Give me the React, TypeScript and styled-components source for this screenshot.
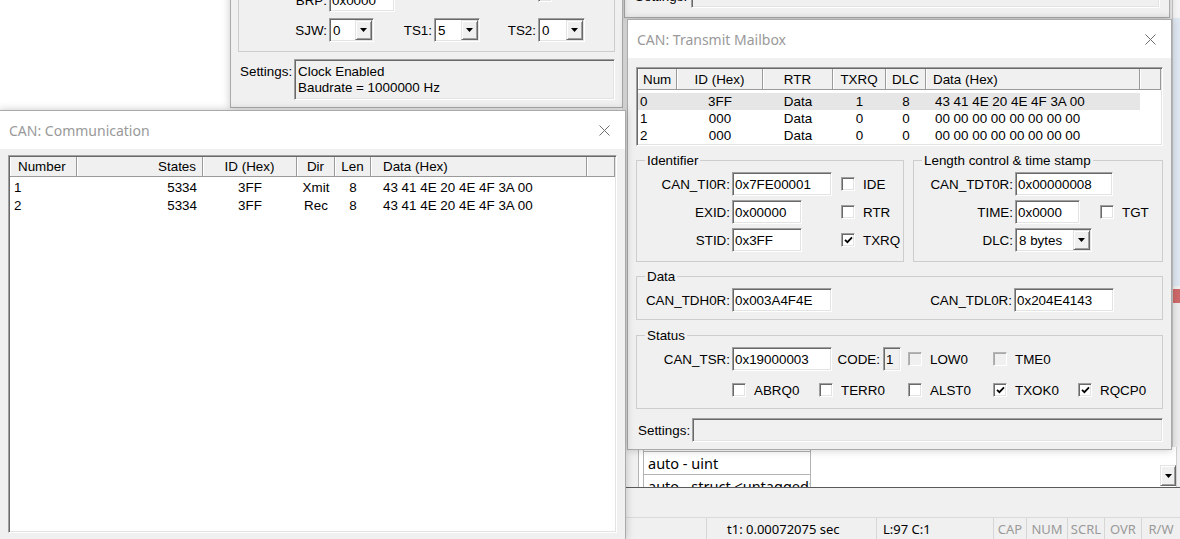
import React from "react";
import styled, { createGlobalStyle, css } from "styled-components";

const UI = `"Liberation Sans", Arial, sans-serif`;
const SEG = `"Noto Sans", "Open Sans", sans-serif`;

const GlobalStyle = createGlobalStyle`
  html, body { margin: 0; padding: 0; background: #ffffff; }
  body { font-family: ${UI}; font-size: 13.4px; color: #000; }
  * { box-sizing: border-box; }
`;

const sunken = css`
  border: 1px solid;
  border-color: #a0a0a0 #ffffff #ffffff #a0a0a0;
  box-shadow: inset 1px 1px 0 #696969, inset -1px -1px 0 #e3e3e3;
`;
const raised = css`
  border: 1px solid;
  border-color: #e3e3e3 #696969 #696969 #e3e3e3;
  box-shadow: inset 1px 1px 0 #ffffff, inset -1px -1px 0 #a0a0a0;
`;

/* ---------- desktop / IDE backdrop ---------- */
const Desktop = styled.div`
  position: relative;
  width: 1180px;
  height: 539px;
  overflow: hidden;
  display: flex;
  background: #fff;
`;
const Editor = styled.div`
  flex: 1;
  background: #fff;
`;
const Ide = styled.div`
  width: 558px;
  flex: none;
  display: flex;
  flex-direction: column;
  background: #f0f0f0;
`;
const IdeUpper = styled.div`
  height: 447px;
  flex: none;
  display: flex;
`;
const IdeFill = styled.div`
  flex: 1;
  background: #f0f0f0;
`;
const Strip = styled.div`
  width: 8px;
  flex: none;
  display: flex;
  flex-direction: column;
  border-left: 1px solid #c8c8c8;
`;
const StripPart = styled.div<{ $h?: number; $bg: string }>`
  ${(p) => (p.$h ? `height: ${p.$h}px; flex: none;` : "flex: 1;")}
  background: ${(p) => p.$bg};
`;
const WatchArea = styled.div`
  height: 40px;
  flex: none;
  display: flex;
  background: #fff;
  overflow: hidden;
`;
const WatchGutter = styled.div`
  width: 17px;
  flex: none;
  background: #f0f0f0;
  border-right: 1px solid #b4b4b4;
`;
const WatchPad = styled.div`
  width: 5px;
  flex: none;
  border-right: 1px solid #b4b4b4;
`;
const WatchCol = styled.div`
  width: 167px;
  flex: none;
  border-right: 1px solid #b4b4b4;
  display: flex;
  flex-direction: column;
  overflow: hidden;
`;
const WatchCell = styled.div<{ $h: number }>`
  height: ${(p) => p.$h}px;
  flex: none;
  border-bottom: 1px solid #b4b4b4;
  padding-left: 4px;
  display: flex;
  align-items: center;
  font-family: ${SEG};
  font-size: 14.5px;
  white-space: nowrap;
  overflow: hidden;
`;
const WatchWhite = styled.div`
  flex: 1;
`;
const ScrollCol = styled.div`
  width: 16px;
  flex: none;
  display: flex;
  flex-direction: column;
  justify-content: flex-end;
  padding-bottom: 1px;
`;
const ScrollBtn = styled.div`
  ${raised}
  height: 21px;
  background: #f0f0f0;
  display: flex;
  align-items: center;
  justify-content: center;
`;
const WatchEdge = styled.div`
  width: 4px;
  flex: none;
  background: #f0f0f0;
  border-left: 1px solid #d0d0d0;
`;
const Divider = styled.div`
  height: 1px;
  flex: none;
  background: #5a5a5a;
`;
const Band = styled.div`
  height: 29px;
  flex: none;
  background: #f0f0f0;
`;
const StatusBar = styled.div`
  height: 22px;
  flex: none;
  display: flex;
  border-top: 1px solid #dadada;
  font-family: ${SEG};
  font-size: 13px;
  background: #f0f0f0;
`;
const SCell = styled.div<{ $w?: number; $pl?: number; $dim?: boolean; $sep?: boolean }>`
  ${(p) => (p.$w ? `width: ${p.$w}px; flex: none;` : "flex: 1;")}
  display: flex;
  align-items: center;
  justify-content: ${(p) => (p.$pl !== undefined ? "flex-start" : "center")};
  padding-left: ${(p) => p.$pl ?? 0}px;
  color: ${(p) => (p.$dim ? "#9a9a9a" : "#000")};
  border-left: ${(p) => (p.$sep ? "1px solid #d6d6d6" : "none")};
  white-space: nowrap;
`;

/* ---------- window chrome ---------- */
const Win = styled.div<{ $x: number; $y: number; $w: number; $h: number; $z: number }>`
  position: absolute;
  left: ${(p) => p.$x}px;
  top: ${(p) => p.$y}px;
  width: ${(p) => p.$w}px;
  height: ${(p) => p.$h}px;
  z-index: ${(p) => p.$z};
  background: #f0f0f0;
  border: 1px solid #aaaaaa;
  box-shadow: 0 0 8px rgba(0, 0, 0, 0.22);
  display: flex;
  flex-direction: column;
`;
const TitleBar = styled.div`
  height: 38px;
  flex: none;
  background: #fff;
  display: flex;
  align-items: center;
  justify-content: space-between;
  padding: 0 15px 0 9px;
  font-family: ${SEG};
  font-size: 14px;
  color: #999;
`;
const Body = styled.div<{ $pad: string }>`
  flex: 1;
  min-height: 0;
  display: flex;
  flex-direction: column;
  padding: ${(p) => p.$pad};
`;

const CloseIcon = () => (
  <svg width="11" height="11" viewBox="0 0 11 11">
    <path d="M0.5 0.5 L10.5 10.5 M10.5 0.5 L0.5 10.5" stroke="#707070" strokeWidth="1" fill="none" />
  </svg>
);
const DownArrow = () => (
  <svg width="7" height="4" viewBox="0 0 7 4">
    <path d="M0 0 H7 L3.5 4 Z" fill="#000" />
  </svg>
);
const Tick = () => (
  <svg width="9" height="8" viewBox="0 0 9 8">
    <path d="M1 3.8 L3.4 6.2 L8 1.4" fill="none" stroke="#000" strokeWidth="1.8" />
  </svg>
);

/* ---------- controls ---------- */
const TextBox = styled.div<{ $w: number; $ro?: boolean; $span?: number }>`
  ${sunken}
  width: ${(p) => p.$w}px;
  height: 24px;
  flex: none;
  background: ${(p) => (p.$ro ? "#f0f0f0" : "#fff")};
  padding: 0 2px;
  display: flex;
  align-items: center;
  white-space: nowrap;
  overflow: hidden;
  ${(p) => (p.$span ? `grid-column: span ${p.$span};` : "")}
`;
const MultiField = styled.div<{ $h: number }>`
  ${sunken}
  flex: 1;
  height: ${(p) => p.$h}px;
  background: #f0f0f0;
  padding: 4px 3px;
  line-height: 16px;
`;
const ComboBox = styled.div<{ $w: number }>`
  ${sunken}
  width: ${(p) => p.$w}px;
  height: 24px;
  flex: none;
  background: #fff;
  padding: 1px;
  display: flex;
`;
const ComboText = styled.span`
  flex: 1;
  padding-left: 2px;
  display: flex;
  align-items: center;
  white-space: nowrap;
`;
const ComboBtn = styled.span`
  ${raised}
  width: 17px;
  flex: none;
  background: #f0f0f0;
  display: flex;
  align-items: center;
  justify-content: center;
`;
const Combo = ({ w, value }: { w: number; value: string }) => (
  <ComboBox $w={w}>
    <ComboText>{value}</ComboText>
    <ComboBtn>
      <DownArrow />
    </ComboBtn>
  </ComboBox>
);

const Box = styled.span<{ $dis?: boolean; $top?: boolean }>`
  ${sunken}
  width: 14px;
  height: 14px;
  flex: none;
  background: ${(p) => (p.$dis ? "#f0f0f0" : "#fff")};
  ${(p) => (p.$dis ? "border-color: #b4b4b4 #fff #fff #b4b4b4; box-shadow: inset 1px 1px 0 #a8a8a8;" : "")}
  display: inline-flex;
  align-items: center;
  justify-content: center;
  ${(p) => (p.$top ? "align-self: flex-start;" : "")}
`;
const CheckItem = styled.label`
  display: flex;
  align-items: center;
  gap: 8px;
  white-space: nowrap;
`;
const Check = ({ label, checked, disabled }: { label: string; checked?: boolean; disabled?: boolean }) => (
  <CheckItem>
    <Box $dis={disabled}>{checked ? <Tick /> : null}</Box>
    <span>{label}</span>
  </CheckItem>
);

const FLabel = styled.span<{ $w?: number }>`
  ${(p) => (p.$w ? `width: ${p.$w}px; flex: none;` : "")}
  text-align: right;
  padding-right: 2px;
  white-space: nowrap;
`;

/* ---------- groups / forms ---------- */
const Group = styled.fieldset<{ $w?: number; $pb: number; $mt?: number }>`
  margin: ${(p) => p.$mt ?? 0}px 0 0 0;
  padding: 4px 0 ${(p) => p.$pb}px 0;
  border: 1px solid #cdcdcd;
  min-width: 0;
  ${(p) => (p.$w ? `width: ${p.$w}px; flex: none;` : "flex: 1;")}
`;
const Legend = styled.legend`
  margin-left: 8px;
  padding: 0 2px;
  font-size: 13.4px;
  line-height: 15px;
`;
const GroupPair = styled.div<{ $mt: number }>`
  display: flex;
  gap: 9px;
  margin-top: ${(p) => p.$mt}px;
`;
const FormGrid = styled.div<{ $cols: string }>`
  display: grid;
  grid-template-columns: ${(p) => p.$cols};
  grid-auto-rows: 24px;
  row-gap: 4px;
  align-items: center;
  justify-items: start;
  & > ${FLabel} {
    justify-self: stretch;
  }
`;
const StatusRows = styled.div`
  display: flex;
  flex-direction: column;
  gap: 7px;
`;
const CodeWrap = styled.div`
  justify-self: stretch;
  display: flex;
  align-items: center;
  justify-content: flex-end;
  gap: 3px;
  padding-right: 7px;
`;
const SettingsRow = styled.div<{ $mt?: number; $top?: boolean }>`
  display: flex;
  align-items: ${(p) => (p.$top ? "flex-start" : "center")};
  margin-top: ${(p) => p.$mt ?? 0}px;
`;
const SetLabel = styled.span<{ $w: number; $pt?: number }>`
  width: ${(p) => p.$w}px;
  flex: none;
  padding-left: 2px;
  padding-top: ${(p) => p.$pt ?? 0}px;
  white-space: nowrap;
`;
const Frame = styled.div`
  border: 1px solid #cdcdcd;
  padding: 21px 0 9px 0;
  display: flex;
  flex-direction: column;
  gap: 6px;
`;
const FrameRow = styled.div`
  height: 24px;
  display: flex;
  align-items: center;
`;
const Gap = styled.span<{ $w: number }>`
  width: ${(p) => p.$w}px;
  flex: none;
`;

/* ---------- list view ---------- */
type Align = "left" | "center" | "right";
interface Col {
  t: string;
  w: number;
  ha: Align;
  ca: Align;
  hp: number;
  cp: number;
}
const jc = (a: Align) => (a === "left" ? "flex-start" : a === "right" ? "flex-end" : "center");

const ListFrame = styled.div<{ $h?: number }>`
  ${sunken}
  background: #fff;
  padding: 1px;
  display: flex;
  flex-direction: column;
  overflow: hidden;
  ${(p) => (p.$h ? `height: ${p.$h}px; flex: none;` : "flex: 1;")}
`;
const HeadRow = styled.div<{ $h: number }>`
  height: ${(p) => p.$h}px;
  flex: none;
  display: flex;
  background: #f0f0f0;
  border-bottom: 1px solid #9a9a9a;
`;
const HeadCell = styled.div<{ $w?: number; $a: Align; $p: number }>`
  ${(p) => (p.$w ? `width: ${p.$w}px; flex: none;` : "flex: 1;")}
  display: flex;
  align-items: center;
  justify-content: ${(p) => jc(p.$a)};
  padding: 0 ${(p) => p.$p}px;
  border-right: 1px solid #9a9a9a;
  box-shadow: inset 1px 0 0 #ffffff;
  white-space: nowrap;
  overflow: hidden;
`;
const RowsArea = styled.div<{ $pt: number }>`
  padding-top: ${(p) => p.$pt}px;
  display: flex;
  flex-direction: column;
  align-items: flex-start;
`;
const LRow = styled.div<{ $h: number; $sel?: boolean }>`
  display: flex;
  height: ${(p) => p.$h}px;
  background: ${(p) => (p.$sel ? "#e6e6e6" : "transparent")};
`;
const LCell = styled.div<{ $w: number; $a: Align; $p: number }>`
  width: ${(p) => p.$w}px;
  flex: none;
  display: flex;
  align-items: center;
  justify-content: ${(p) => jc(p.$a)};
  padding: 0 ${(p) => p.$p}px;
  white-space: nowrap;
`;

const ListView = ({
  cols,
  rows,
  height,
  headH,
  rowTop,
  rowH,
  sel,
}: {
  cols: Col[];
  rows: string[][];
  height?: number;
  headH: number;
  rowTop: number;
  rowH: number;
  sel?: number;
}) => (
  <ListFrame $h={height}>
    <HeadRow $h={headH}>
      {cols.map((c) => (
        <HeadCell key={c.t} $w={c.w} $a={c.ha} $p={c.hp}>
          {c.t}
        </HeadCell>
      ))}
      <HeadCell $a="left" $p={0} />
    </HeadRow>
    <RowsArea $pt={rowTop}>
      {rows.map((r, i) => (
        <LRow key={i} $h={rowH} $sel={i === sel}>
          {r.map((v, j) => (
            <LCell key={j} $w={cols[j].w} $a={cols[j].ca} $p={cols[j].cp}>
              {v}
            </LCell>
          ))}
        </LRow>
      ))}
    </RowsArea>
  </ListFrame>
);

const commCols: Col[] = [
  { t: "Number", w: 67, ha: "left", ca: "left", hp: 8, cp: 4 },
  { t: "States", w: 126, ha: "right", ca: "right", hp: 6, cp: 6 },
  { t: "ID (Hex)", w: 94, ha: "center", ca: "center", hp: 0, cp: 0 },
  { t: "Dir", w: 38, ha: "center", ca: "center", hp: 0, cp: 0 },
  { t: "Len", w: 36, ha: "center", ca: "center", hp: 0, cp: 0 },
  { t: "Data (Hex)", w: 216, ha: "left", ca: "left", hp: 12, cp: 12 },
];
const commRows = [
  ["1", "5334", "3FF", "Xmit", "8", "43 41 4E 20 4E 4F 3A 00"],
  ["2", "5334", "3FF", "Rec", "8", "43 41 4E 20 4E 4F 3A 00"],
];

const mbCols: Col[] = [
  { t: "Num", w: 39, ha: "left", ca: "left", hp: 5, cp: 2 },
  { t: "ID (Hex)", w: 86, ha: "center", ca: "center", hp: 0, cp: 0 },
  { t: "RTR", w: 70, ha: "center", ca: "center", hp: 0, cp: 0 },
  { t: "TXRQ", w: 53, ha: "center", ca: "center", hp: 0, cp: 0 },
  { t: "DLC", w: 40, ha: "center", ca: "center", hp: 0, cp: 0 },
  { t: "Data (Hex)", w: 214, ha: "left", ca: "left", hp: 7, cp: 9 },
];
const mbRows = [
  ["0", "3FF", "Data", "1", "8", "43 41 4E 20 4E 4F 3A 00"],
  ["1", "000", "Data", "0", "0", "00 00 00 00 00 00 00 00"],
  ["2", "000", "Data", "0", "0", "00 00 00 00 00 00 00 00"],
];

export default function App() {
  return (
    <>
      <GlobalStyle />
      <Desktop>
        <Editor />
        <Ide>
          <IdeUpper>
            <IdeFill />
            <Strip>
              <StripPart $h={18} $bg="#f4f4f4" />
              <StripPart $h={268} $bg="#dfe7f2" />
              <StripPart $h={3} $bg="#f0f0f0" />
              <StripPart $h={14} $bg="#cf6a6a" />
              <StripPart $bg="#ececec" />
            </Strip>
          </IdeUpper>
          <WatchArea>
            <WatchGutter />
            <WatchPad />
            <WatchCol>
              <WatchCell $h={5} />
              <WatchCell $h={23}>auto - uint</WatchCell>
              <WatchCell $h={23}>auto - struct &lt;untagged&gt;</WatchCell>
            </WatchCol>
            <WatchWhite />
            <ScrollCol>
              <ScrollBtn>
                <DownArrow />
              </ScrollBtn>
            </ScrollCol>
            <WatchEdge />
          </WatchArea>
          <Divider />
          <Band />
          <StatusBar>
            <SCell $w={84} />
            <SCell $w={170} $pl={20} $sep>
              t1: 0.00072075 sec
            </SCell>
            <SCell $w={117} $pl={6} $sep>
              L:97 C:1
            </SCell>
            <SCell $w={33} $dim $sep>
              CAP
            </SCell>
            <SCell $w={41} $dim $sep>
              NUM
            </SCell>
            <SCell $w={37} $dim $sep>
              SCRL
            </SCell>
            <SCell $w={37} $dim $sep>
              OVR
            </SCell>
            <SCell $dim $sep>
              R/W
            </SCell>
          </StatusBar>
        </Ide>

        {/* peripheral window behind the mailbox (top right) */}
        <Win $x={624} $y={-22} $w={546} $h={40} $z={1}>
          <Body $pad="5px 9px 8px 8px">
            <SettingsRow>
              <SetLabel $w={58}>Settings:</SetLabel>
              <MultiField $h={24} />
            </SettingsRow>
          </Body>
        </Win>

        {/* CAN basic window (top) */}
        <Win $x={230} $y={-40} $w={393} $h={148} $z={2}>
          <Body $pad="5px 7px 7px 7px">
            <Frame>
              <FrameRow>
                <FLabel $w={90}>BRP:</FLabel>
                <TextBox $w={66}>0x0000</TextBox>
                <Gap $w={143} />
                <Box $top />
              </FrameRow>
              <FrameRow>
                <FLabel $w={90}>SJW:</FLabel>
                <Combo w={45} value="0" />
                <FLabel $w={60}>TS1:</FLabel>
                <Combo w={46} value="5" />
                <FLabel $w={58}>TS2:</FLabel>
                <Combo w={47} value="0" />
              </FrameRow>
            </Frame>
            <SettingsRow $mt={7} $top>
              <SetLabel $w={56} $pt={5}>
                Settings:
              </SetLabel>
              <MultiField $h={41}>
                Clock Enabled
                <br />
                Baudrate = 1000000 Hz
              </MultiField>
            </SettingsRow>
          </Body>
        </Win>

        {/* CAN: Transmit Mailbox */}
        <Win $x={627} $y={19} $w={545} $h={431} $z={3}>
          <TitleBar>
            <span>CAN: Transmit Mailbox</span>
            <CloseIcon />
          </TitleBar>
          <Body $pad="9px 8px 7px 8px">
            <ListView cols={mbCols} rows={mbRows} height={79} headH={21} rowTop={3} rowH={17} sel={0} />
            <GroupPair $mt={7}>
              <Group $w={268} $pb={9}>
                <Legend>Identifier</Legend>
                <FormGrid $cols="95px 109px 1fr">
                  <FLabel>CAN_TI0R:</FLabel>
                  <TextBox $w={100}>0x7FE00001</TextBox>
                  <Check label="IDE" />
                  <FLabel>EXID:</FLabel>
                  <TextBox $w={70}>0x00000</TextBox>
                  <Check label="RTR" />
                  <FLabel>STID:</FLabel>
                  <TextBox $w={70}>0x3FF</TextBox>
                  <Check label="TXRQ" checked />
                </FormGrid>
              </Group>
              <Group $pb={9}>
                <Legend>Length control &amp; time stamp</Legend>
                <FormGrid $cols="101px 85px 1fr">
                  <FLabel>CAN_TDT0R:</FLabel>
                  <TextBox $w={98} $span={2}>
                    0x00000008
                  </TextBox>
                  <FLabel>TIME:</FLabel>
                  <TextBox $w={65}>0x0000</TextBox>
                  <Check label="TGT" />
                  <FLabel>DLC:</FLabel>
                  <Combo w={77} value="8 bytes" />
                </FormGrid>
              </Group>
            </GroupPair>
            <Group $pb={7} $mt={7}>
              <Legend>Data</Legend>
              <FormGrid $cols="95px 100px 182px 100px">
                <FLabel>CAN_TDH0R:</FLabel>
                <TextBox $w={100}>0x003A4F4E</TextBox>
                <FLabel>CAN_TDL0R:</FLabel>
                <TextBox $w={100}>0x204E4143</TextBox>
              </FormGrid>
            </Group>
            <Group $pb={6} $mt={8}>
              <Legend>Status</Legend>
              <StatusRows>
                <FormGrid $cols="95px 100px 76px 85px 85px">
                  <FLabel>CAN_TSR:</FLabel>
                  <TextBox $w={100}>0x19000003</TextBox>
                  <CodeWrap>
                    <span>CODE:</span>
                    <TextBox $w={18} $ro>
                      1
                    </TextBox>
                  </CodeWrap>
                  <Check label="LOW0" disabled />
                  <Check label="TME0" disabled />
                </FormGrid>
                <FormGrid $cols="95px 87px 89px 85px 85px 1fr">
                  <span />
                  <Check label="ABRQ0" />
                  <Check label="TERR0" />
                  <Check label="ALST0" />
                  <Check label="TXOK0" checked />
                  <Check label="RQCP0" checked />
                </FormGrid>
              </StatusRows>
            </Group>
            <SettingsRow $mt={9}>
              <SetLabel $w={56}>Settings:</SetLabel>
              <MultiField $h={24} />
            </SettingsRow>
          </Body>
        </Win>

        {/* CAN: Communication */}
        <Win $x={-1} $y={110} $w={627} $h={430} $z={4}>
          <TitleBar>
            <span>CAN: Communication</span>
            <CloseIcon />
          </TitleBar>
          <Body $pad="6px 8px 6px 8px">
            <ListView cols={commCols} rows={commRows} headH={20} rowTop={1} rowH={18} />
          </Body>
        </Win>
      </Desktop>
    </>
  );
}
